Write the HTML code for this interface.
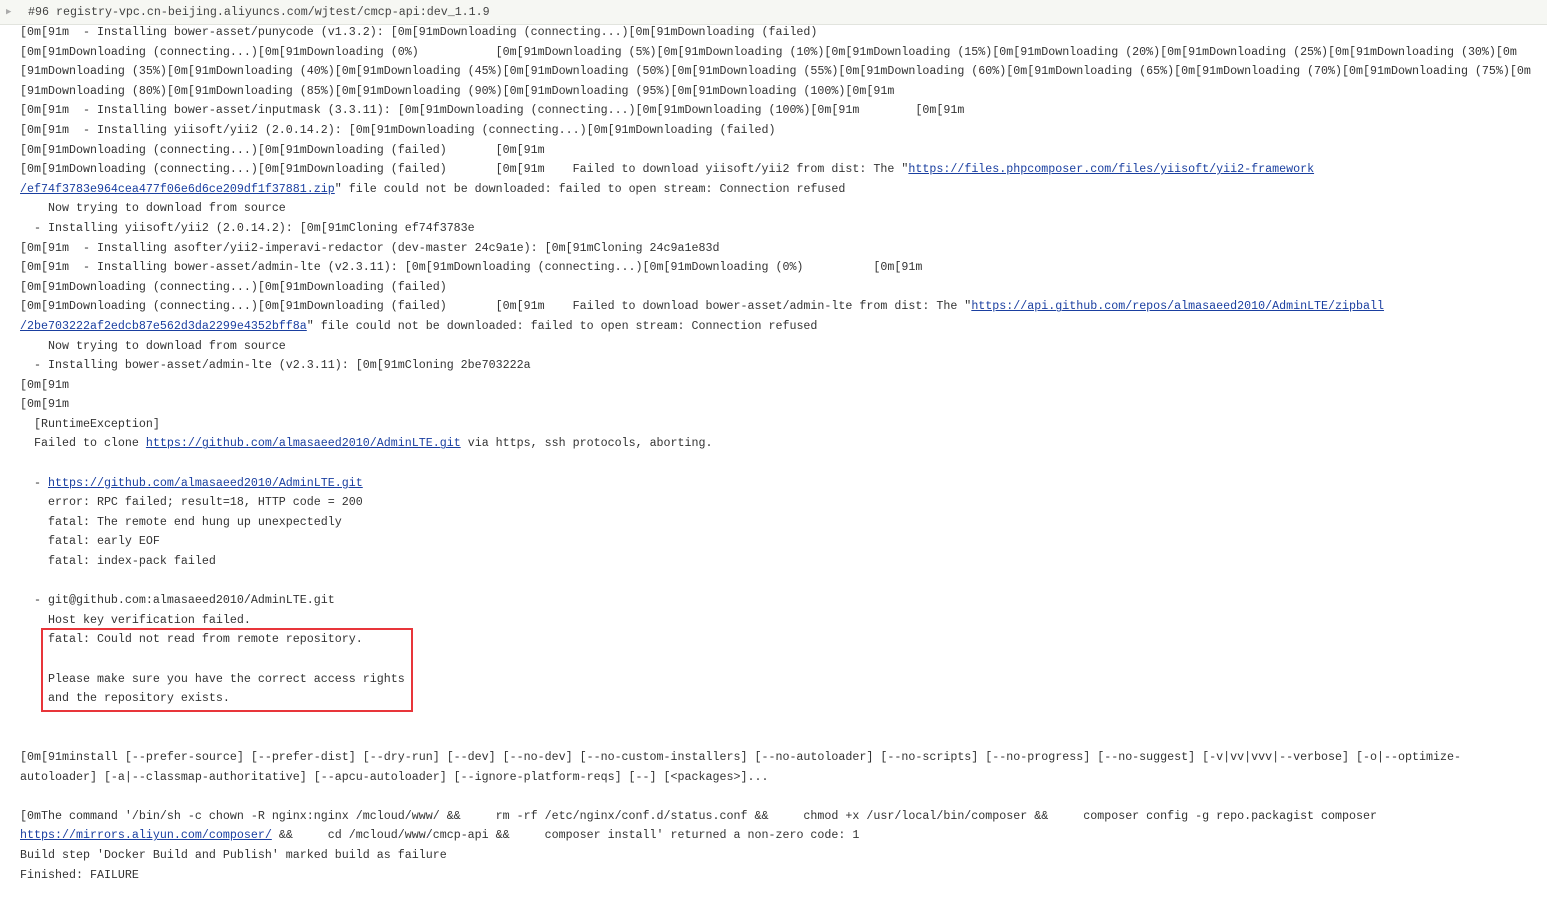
<!DOCTYPE html>
<html><head><meta charset="utf-8"><style>
html,body{margin:0;padding:0;background:#fff;width:1547px;height:897px;overflow:hidden}
.hdr{position:absolute;left:0;top:0;width:1547px;height:24px;background:#f6f7f3;border-bottom:1px solid #e2e4de;font:11.67px/24px "Liberation Mono",monospace;color:#444}
.hdr .t{position:absolute;left:6px;top:0;color:#aaa;font-size:9px}
.hdr .x{position:absolute;left:28px;top:0}
pre{position:absolute;left:20px;top:23px;margin:0;font:11.67px/19.6px "Liberation Mono","Noto Sans CJK SC",monospace;color:#333;white-space:pre}
a{color:#1a3fa0;text-decoration:underline}
.box{position:absolute;left:41px;top:628px;width:368px;height:80px;border:2px solid #e8353a}
</style></head><body>
<div class="hdr"><span class="t">▶</span><span class="x">#96 registry-vpc.cn-beijing.aliyuncs.com/wjtest/cmcp-api:dev_1.1.9</span></div>
<pre>[0m[91m  - Installing bower-asset/punycode (v1.3.2): [0m[91mDownloading (connecting...)[0m[91mDownloading (failed)
[0m[91mDownloading (connecting...)[0m[91mDownloading (0%)           [0m[91mDownloading (5%)[0m[91mDownloading (10%)[0m[91mDownloading (15%)[0m[91mDownloading (20%)[0m[91mDownloading (25%)[0m[91mDownloading (30%)[0m
[91mDownloading (35%)[0m[91mDownloading (40%)[0m[91mDownloading (45%)[0m[91mDownloading (50%)[0m[91mDownloading (55%)[0m[91mDownloading (60%)[0m[91mDownloading (65%)[0m[91mDownloading (70%)[0m[91mDownloading (75%)[0m
[91mDownloading (80%)[0m[91mDownloading (85%)[0m[91mDownloading (90%)[0m[91mDownloading (95%)[0m[91mDownloading (100%)[0m[91m
[0m[91m  - Installing bower-asset/inputmask (3.3.11): [0m[91mDownloading (connecting...)[0m[91mDownloading (100%)[0m[91m        [0m[91m
[0m[91m  - Installing yiisoft/yii2 (2.0.14.2): [0m[91mDownloading (connecting...)[0m[91mDownloading (failed)
[0m[91mDownloading (connecting...)[0m[91mDownloading (failed)       [0m[91m
[0m[91mDownloading (connecting...)[0m[91mDownloading (failed)       [0m[91m    Failed to download yiisoft/yii2 from dist: The "<a>https://files.phpcomposer.com/files/yiisoft/yii2-framework</a>
<a>/ef74f3783e964cea477f06e6d6ce209df1f37881.zip</a>" file could not be downloaded: failed to open stream: Connection refused
    Now trying to download from source
  - Installing yiisoft/yii2 (2.0.14.2): [0m[91mCloning ef74f3783e
[0m[91m  - Installing asofter/yii2-imperavi-redactor (dev-master 24c9a1e): [0m[91mCloning 24c9a1e83d
[0m[91m  - Installing bower-asset/admin-lte (v2.3.11): [0m[91mDownloading (connecting...)[0m[91mDownloading (0%)          [0m[91m
[0m[91mDownloading (connecting...)[0m[91mDownloading (failed)
[0m[91mDownloading (connecting...)[0m[91mDownloading (failed)       [0m[91m    Failed to download bower-asset/admin-lte from dist: The "<a>https://api.github.com/repos/almasaeed2010/AdminLTE/zipball</a>
<a>/2be703222af2edcb87e562d3da2299e4352bff8a</a>" file could not be downloaded: failed to open stream: Connection refused
    Now trying to download from source
  - Installing bower-asset/admin-lte (v2.3.11): [0m[91mCloning 2be703222a
[0m[91m
[0m[91m
  [RuntimeException]
  Failed to clone <a>https://github.com/almasaeed2010/AdminLTE.git</a> via https, ssh protocols, aborting.

  - <a>https://github.com/almasaeed2010/AdminLTE.git</a>
    error: RPC failed; result=18, HTTP code = 200
    fatal: The remote end hung up unexpectedly
    fatal: early EOF
    fatal: index-pack failed

  - git@github.com:almasaeed2010/AdminLTE.git
    Host key verification failed.
    fatal: Could not read from remote repository.

    Please make sure you have the correct access rights
    and the repository exists.


[0m[91minstall [--prefer-source] [--prefer-dist] [--dry-run] [--dev] [--no-dev] [--no-custom-installers] [--no-autoloader] [--no-scripts] [--no-progress] [--no-suggest] [-v|vv|vvv|--verbose] [-o|--optimize-
autoloader] [-a|--classmap-authoritative] [--apcu-autoloader] [--ignore-platform-reqs] [--] [&lt;packages&gt;]...

[0mThe command '/bin/sh -c chown -R nginx:nginx /mcloud/www/ &amp;&amp;     rm -rf /etc/nginx/conf.d/status.conf &amp;&amp;     chmod +x /usr/local/bin/composer &amp;&amp;     composer config -g repo.packagist composer
<a>https://mirrors.aliyun.com/composer/</a> &amp;&amp;     cd /mcloud/www/cmcp-api &amp;&amp;     composer install' returned a non-zero code: 1
Build step 'Docker Build and Publish' marked build as failure
Finished: FAILURE</pre>
<div class="box"></div>
</body></html>
